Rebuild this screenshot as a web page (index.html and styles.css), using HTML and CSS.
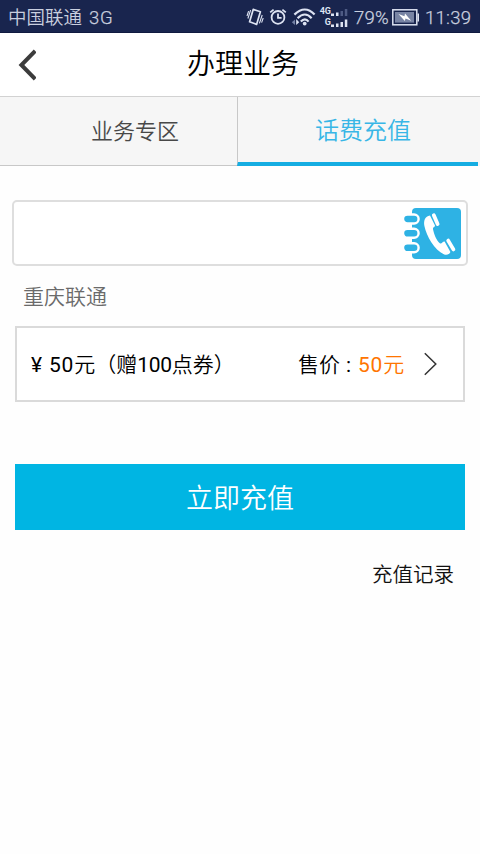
FILE: index.html
```html
<!DOCTYPE html>
<html lang="zh-CN">
<head>
<meta charset="utf-8">
<title>办理业务</title>
<link rel="stylesheet" href="styles.css">
</head>
<body>
<div class="status">
  <span class="carrier">中国联通</span><span class="net">3G</span>
  <div class="status-right">
    <svg class="vibrate" width="18" height="20" viewBox="0 0 18 20" fill="none" stroke="#dde3f2">
      <path d="M7.2 2.4 14.4 4.8 10.6 17.4 3.6 14.8Z" stroke-width="1.7" stroke-linejoin="round"/>
      <path d="M4.6 3.2 1.9 11.5M2.6 4.2 1 9M16.2 8 13.4 16.4M17.2 11 15.6 15.6" stroke-width="1.1"/>
    </svg>
    <svg class="alarm" width="18" height="20" viewBox="0 0 18 20" fill="none" stroke="#dde3f2" stroke-width="1.8">
      <circle cx="9" cy="10.4" r="6.4"/>
      <path d="M9 6.5V10.9H12.6M1.2 5.4 4.6 2.6M16.8 5.4 13.4 2.6"/>
    </svg>
    <svg class="wifi" width="26" height="20" viewBox="0 0 26 20" fill="none" stroke="#dde3f2">
      <path d="M3.4 7.6Q14 -2.6 23.6 7.6M6.6 11.2Q14 3.8 20.6 11.2M9.8 14.6Q14 10.2 17.6 14.6" stroke-width="2.2"/>
      <circle cx="13.7" cy="16.6" r="1.9" fill="#dde3f2" stroke="none"/>
      <path d="M4 12.5V18L.8 15.2Z" fill="#7481a6" stroke="none"/>
      <path d="M5.2 12V18L8.2 15.2Z" fill="#dde3f2" stroke="none"/>
    </svg>
    <div class="signals">
      <div class="signal"><span class="gen">4G</span>
        <svg width="17" height="9" viewBox="0 0 17 9"><path d="M0 6.5H3V9H0ZM5 5.5H7.5V9H5Z" fill="#dde3f2"/><path d="M9.5 4H12V9H9.5ZM13.8 2H16.3V9H13.8Z" fill="#4e5b84"/></svg>
      </div>
      <div class="signal"><span class="gen gen-sub">G</span>
        <svg width="17" height="9" viewBox="0 0 17 9"><path d="M0 6.5H3V9H0ZM5 5.5H7.5V9H5ZM9.5 4H12V9H9.5ZM13.8 1.5H16.3V9H13.8Z" fill="#dde3f2"/></svg>
      </div>
    </div>
    <span class="percent">79%</span>
    <svg class="battery" width="28" height="17" viewBox="0 0 28 17">
      <rect x=".8" y=".8" width="24" height="15" fill="none" stroke="#dde3f2" stroke-width="1.5"/>
      <path d="M25.5 4.5H27V12.5H25.5Z" fill="#dde3f2"/>
      <rect x="3" y="3" width="19" height="10.6" fill="#7884a4"/>
      <path d="M6.5 5 12.5 7.2 13 4.6 19.2 11.8 13.5 9.6 12.8 12Z" fill="#fff"/>
    </svg>
    <span class="time">11:39</span>
  </div>
</div>

<header class="header">
  <svg class="back" width="20" height="32" viewBox="0 0 20 32"><path d="M19.2 2 5.4 16 19.2 30" fill="none" stroke="#3c3c3c" stroke-width="4"/></svg>
  <h1 class="title">办理业务</h1>
</header>

<nav class="tabs">
  <div class="tab tab-area">业务专区</div>
  <div class="tab tab-active">话费充值</div>
</nav>

<main class="main">
  <div class="phone-field">
    <svg width="60" height="54" viewBox="0 0 60 54">
      <rect x="10" y="1" width="49" height="51" rx="4" fill="#2eb2e4"/>
      <g fill="#2eb2e4" stroke="#fff" stroke-width="2.4">
        <rect x="1" y="7.5" width="15.6" height="9" rx="4.5"/>
        <rect x="1" y="21.8" width="15.6" height="9" rx="4.5"/>
        <rect x="1" y="36.3" width="15.6" height="9" rx="4.5"/>
      </g>
      <path d="M28 8.4C23 9.2 21.4 13.5 22.4 19C24.6 29 32 43 42.2 47.4C45 48.5 47.4 47.3 48.4 45L42.6 34.5C40.5 34.2 39.8 37.3 37.8 36.2C34.3 33.2 32 27 31 22.2C30.7 19.6 32.6 20.6 33 18.4Z" fill="#fff"/>
      <path d="M31.8 8.2 35.6 17M46.2 33.6 51.4 42.4" fill="none" stroke="#fff" stroke-width="3.8" stroke-linecap="round"/>
    </svg>
  </div>
  <div class="region">重庆联通</div>
  <div class="plan">
    <span class="yen">¥</span><span class="plan-name"><span class="amount">50</span>元（赠<span class="bonus">100</span>点券）</span>
    <span class="sale">售价</span><span class="colon">:</span><span class="price"><span class="amount">50</span>元</span>
    <svg class="chevron" width="15" height="24" viewBox="0 0 15 24"><path d="M1.8 1.2 12.8 12 1.8 22.8" fill="none" stroke="#333" stroke-width="1.5"/></svg>
  </div>
  <button class="submit">立即充值</button>
  <a class="history">充值记录</a>
</main>
</body>
</html>
```

FILE: styles.css
```css
* { box-sizing: border-box; }
body {
  margin: 0;
  height: 854px;
  background: #fefefe;
  color: #111;
  font-family: Roboto, "Noto Sans CJK SC", sans-serif;
  font-weight: 350;
  white-space: nowrap;
  overflow: hidden;
}
svg { display: block; flex: none; }
.status {
  display: flex;
  align-items: center;
  height: 33px;
  padding: 2px 8px 0;
  background: #19254e;
  border-bottom: 1px solid #101a40;
  color: #c9cfdf;
  font-size: 18.5px;
  line-height: 30px;
}
.carrier { padding-top: 2px; }
.net { margin-left: 7px; padding-top: 2px; letter-spacing: .6px; }
.status-right { display: flex; align-items: center; margin-left: auto; }
.vibrate { margin-right: 5px; }
.alarm { margin-right: 4px; }
.wifi { margin-right: 2px; }
.signals { width: 29px; margin: -2px 6px 0 0; }
.signal { display: flex; justify-content: flex-end; align-items: flex-end; height: 11px; }
.gen { font: 700 9px/10px Roboto, sans-serif; color: #dde3f2; }
.percent { width: 38px; padding-top: 2px; letter-spacing: .2px; }
.battery { margin-right: 5px; }
.time { width: 47px; padding-top: 2px; letter-spacing: .3px; }
.net, .percent, .time { font-weight: 350; -webkit-text-stroke: .25px currentColor; }

.header { display: flex; align-items: center; height: 63px; background: #fff; }
.back { margin-left: 16px; }
.title { margin: 0 0 0 151px; font-size: 28px; font-weight: 350; line-height: 40px; color: #000; }

.tabs {
  display: grid;
  grid-template-columns: 237px 241px;
  height: 70px;
  border-top: 1px solid #d2d2d2;
  background: linear-gradient(#f6f6f6 69px, #fefefe 69px);
}
.tab { height: 69px; line-height: 68px; font-weight: 350; }
.tab-area {
  padding-left: 91px;
  border-bottom: 1px solid #c8c8c8;
  font-size: 22px;
  line-height: 69px;
  color: #484848;
}
.tab-active {
  padding-left: 77px;
  border-left: 1px solid #c8c8c8;
  border-bottom: 4px solid #15ade2;
  font-size: 24px;
  color: #38b6e6;
}

.main { display: flex; flex-direction: column; padding: 34px 15px 0; }
.phone-field {
  display: flex;
  justify-content: flex-end;
  align-items: center;
  height: 66px;
  margin: 0 -3px;
  padding: 2px 4px 0 0;
  border: 2px solid #dedede;
  border-radius: 5px;
  background: #fff;
}
.region { margin: 15px 0 0 8px; font-size: 21px; line-height: 32px; color: #6a6a6a; }
.plan {
  display: flex;
  align-items: center;
  height: 76px;
  margin-top: 13px;
  padding-left: 14px;
  border: 2px solid #dadada;
  background: #fff;
  font-size: 21px;
  line-height: 30px;
  color: #000;
}
.plan > span { padding-top: 1px; }
.yen { width: 18px; font-weight: 400; }
.plan-name { width: 249px; }
.amount { font-weight: 400; letter-spacing: .8px; }
.bonus { font-weight: 400; letter-spacing: -.3px; }
.sale { width: 48px; }
.colon { width: 12px; font-weight: 400; }
.price { width: 65px; color: #ff7500; }
.submit {
  height: 66px;
  margin-top: 62px;
  padding: 0 0 2px;
  border: 0;
  background: #00b5e3;
  color: #fff;
  font-family: inherit;
  font-size: 27px;
  font-weight: 350;
}
.history { align-self: flex-end; margin: 30px 11px 0 0; font-size: 20.5px; line-height: 30px; }
```
